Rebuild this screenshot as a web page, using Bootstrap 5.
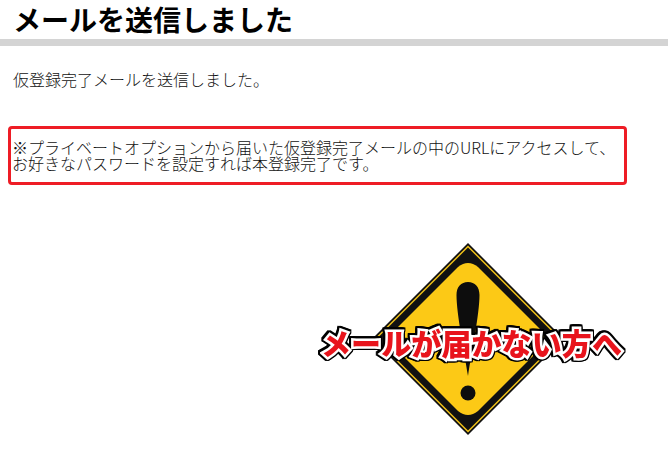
<!DOCTYPE html>
<html lang="ja">
<head>
<meta charset="utf-8">
<title>メールを送信しました</title>
<link href="https://cdn.jsdelivr.net/npm/bootstrap@5.3.0/dist/css/bootstrap.min.css" rel="stylesheet">
<style>
html,body{height:451px;overflow:hidden;background:#fff;}
body{font-family:"Noto Sans CJK JP","Noto Sans",sans-serif;color:#1c1c1c;font-size:16px;}
.head-title{font-size:28px;font-weight:700;line-height:38px;color:#000;margin:0;padding-left:13px;border-bottom:7px solid #d4d4d4;height:46px;}
.lead-msg{margin:0;padding:23px 0 0 13px;line-height:20px;height:80px;font-weight:300;color:#111;}
.notice-box{margin-left:8px;width:619px;height:59px;border:3.5px solid #ee1c25;border-radius:4px;padding:10px 0 0 1px;line-height:16px;font-weight:300;color:#111;}
.promo{margin-left:320px;width:310px;height:192px;margin-top:58px;}
.promo svg{display:block;margin-left:52px;}
.promo-label{left:1px;top:81px;white-space:nowrap;font-size:30px;line-height:36px;font-weight:900;color:#e8141c;letter-spacing:.1px;-webkit-text-stroke:5px #fff;paint-order:stroke fill;filter:drop-shadow(1.5px 0 0 #000) drop-shadow(-1.5px 0 0 #000) drop-shadow(0 1.5px 0 #000) drop-shadow(0 -1.5px 0 #000);}
</style>
</head>
<body>
<h1 class="head-title">メールを送信しました</h1>
<p class="lead-msg">仮登録完了メールを送信しました。</p>
<div class="notice-box">※プライベートオプションから届いた仮登録完了メールの中のURLにアクセスして、<br>お好きなパスワードを設定すれば本登録完了です。</div>
<div class="promo position-relative">
<svg width="192" height="192" viewBox="0 0 192 192" aria-hidden="true">
<polygon points="96,0 192,96 96,192 0,96" fill="#111"/>
<polygon points="96,2.5 189.5,96 96,189.5 2.5,96" fill="#f5c518"/>
<polygon points="96,4.5 187.5,96 96,187.5 4.5,96" fill="#111"/>
<path d="M86,24 Q96,16 106,24 L167,85 Q177,96 167,107 L106,168 Q96,176 86,168 L25,107 Q15,96 25,85 Z" fill="#fcc916"/>
<path d="M96,39 C103,39 107.500,44 107.500,52 C107.500,70 100,108 96,133 C92,108 84.500,70 84.500,52 C84.500,44 89,39 96,39 Z" fill="#0d0d0d"/>
<circle cx="96" cy="150" r="7.500" fill="#0d0d0d"/>
</svg>
<div class="promo-label position-absolute">メールが届かない方へ</div>
</div>
</body>
</html>
